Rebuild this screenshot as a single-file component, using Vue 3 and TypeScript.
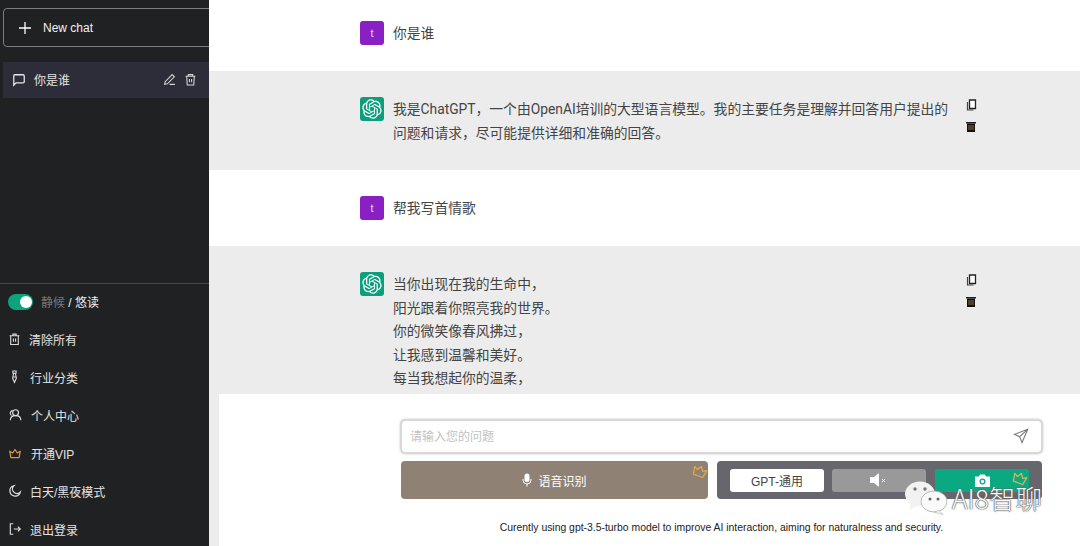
<script setup lang="ts">
const menu = [
  { icon: 'trash', label: '清除所有', cls: 'm-a' },
  { icon: 'tie', label: '行业分类', cls: 'm-b' },
  { icon: 'user', label: '个人中心', cls: 'm-b' },
  { icon: 'crown', label: '开通VIP', cls: 'm-b' },
  { icon: 'moon', label: '白天/黑夜模式', cls: 'm-a' },
  { icon: 'logout', label: '退出登录', cls: 'm-a' },
]
const poem = ['当你出现在我的生命中，', '阳光跟着你照亮我的世界。', '你的微笑像春风拂过，', '让我感到温馨和美好。', '每当我想起你的温柔，', '我的心就会跳动不停。']
const gpt = 'M37.5324 16.8707C37.9808 15.5241 38.1363 14.0974 37.9886 12.6859C37.8409 11.2744 37.3934 9.91076 36.676 8.68622C35.6126 6.83404 33.9882 5.3676 32.0373 4.4985C30.0864 3.62941 27.9098 3.40259 25.8215 3.85078C24.8796 2.7893 23.7219 1.94125 22.4257 1.36341C21.1295 0.785575 19.7249 0.491269 18.3058 0.500197C16.1708 0.495044 14.0893 1.16803 12.3614 2.42214C10.6335 3.67624 9.34853 5.44666 8.6917 7.47815C7.30085 7.76286 5.98686 8.3414 4.8377 9.17505C3.68854 10.0087 2.73073 11.0782 2.02839 12.312C0.956464 14.1591 0.498905 16.2988 0.721698 18.4228C0.944492 20.5467 1.83612 22.5449 3.268 24.1293C2.81966 25.4759 2.66413 26.9026 2.81182 28.3141C2.95951 29.7256 3.40701 31.0892 4.12437 32.3138C5.18791 34.1659 6.8123 35.6322 8.76321 36.5013C10.7141 37.3704 12.8907 37.5973 14.9789 37.1492C15.9208 38.2107 17.0786 39.0587 18.3747 39.6366C19.6709 40.2144 21.0755 40.5087 22.4946 40.4998C24.6307 40.5054 26.7133 39.8321 28.4418 38.5772C30.1704 37.3223 31.4556 35.5506 32.1119 33.5179C33.5027 33.2332 34.8167 32.6547 35.9659 31.821C37.115 30.9874 38.0728 29.9178 38.7752 28.684C39.8458 26.8371 40.3023 24.6979 40.0789 22.5748C39.8556 20.4517 38.9639 18.4544 37.5324 16.8707ZM22.4978 37.8849C20.7443 37.8874 19.0459 37.2733 17.6994 36.1501C17.7601 36.117 17.8666 36.0586 17.936 36.0161L25.9004 31.4156C26.1003 31.3019 26.2663 31.137 26.3813 30.9378C26.4964 30.7386 26.5563 30.5124 26.5549 30.2825V19.0542L29.9213 20.998C29.9389 21.0068 29.9541 21.0198 29.9656 21.0359C29.977 21.052 29.9842 21.0707 29.9867 21.0902V30.3889C29.9842 32.375 29.1946 34.2791 27.7909 35.6841C26.3872 37.0892 24.4838 37.8806 22.4978 37.8849ZM6.39227 31.0064C5.51397 29.4888 5.19742 27.7107 5.49804 25.9832C5.55718 26.0187 5.66048 26.0818 5.73461 26.1244L13.699 30.7248C13.8975 30.8408 14.1233 30.902 14.3532 30.902C14.583 30.902 14.8088 30.8408 15.0073 30.7248L24.731 25.1103V28.9979C24.7321 29.0177 24.7283 29.0376 24.7199 29.0556C24.7115 29.0736 24.6988 29.0893 24.6829 29.1012L16.6317 33.7497C14.9096 34.7416 12.8643 35.0097 10.9447 34.4954C9.02506 33.9811 7.38785 32.7263 6.39227 31.0064ZM4.29707 13.6194C5.17156 12.0998 6.55279 10.9364 8.19885 10.3327C8.19885 10.4013 8.19491 10.5228 8.19491 10.6071V19.808C8.19351 20.0378 8.25334 20.2638 8.36823 20.4629C8.48312 20.6619 8.64893 20.8267 8.84863 20.9404L18.5723 26.5542L15.206 28.4979C15.1894 28.5089 15.1703 28.5155 15.1505 28.5173C15.1307 28.5191 15.1107 28.516 15.0924 28.5082L7.04046 23.8557C5.32135 22.8601 4.06716 21.2235 3.55289 19.3046C3.03862 17.3858 3.30624 15.3413 4.29707 13.6194ZM31.955 20.0556L22.2312 14.4411L25.5976 12.4981C25.6142 12.4872 25.6333 12.4805 25.6531 12.4787C25.6729 12.4769 25.6928 12.4801 25.7111 12.4879L33.7631 17.1364C34.9967 17.849 36.0017 18.8982 36.6606 20.1613C37.3194 21.4244 37.6047 22.849 37.4832 24.2684C37.3617 25.6878 36.8382 27.0432 35.9743 28.1759C35.1103 29.3086 33.9415 30.1717 32.6047 30.6641C32.6047 30.5947 32.6047 30.4733 32.6047 30.3889V21.188C32.6066 20.9586 32.5474 20.7328 32.4332 20.5338C32.319 20.3348 32.154 20.1698 31.955 20.0556ZM35.3055 15.0128C35.2464 14.9765 35.1431 14.9142 35.069 14.8717L27.1045 10.2712C26.906 10.1554 26.6803 10.0943 26.4504 10.0943C26.2206 10.0943 25.9948 10.1554 25.7963 10.2712L16.0726 15.8858V11.9982C16.0715 11.9783 16.0753 11.9585 16.0837 11.9405C16.0921 11.9225 16.1048 11.9068 16.1207 11.8949L24.1719 7.25025C25.4053 6.53903 26.8158 6.19376 28.2383 6.25482C29.6608 6.31589 31.0364 6.78077 32.2044 7.59508C33.3723 8.40939 34.2842 9.53945 34.8334 10.8531C35.3826 12.1667 35.5464 13.6095 35.3055 15.0128ZM14.2424 21.9419L10.8752 19.9981C10.8576 19.9893 10.8423 19.9763 10.8309 19.9602C10.8195 19.9441 10.8122 19.9254 10.8098 19.9058V10.6071C10.8107 9.18295 11.2173 7.78848 11.9819 6.58696C12.7466 5.38544 13.8377 4.42659 15.1275 3.82264C16.4173 3.21869 17.8524 2.99464 19.2649 3.1767C20.6775 3.35876 22.0089 3.93941 23.1034 4.85067C23.0427 4.88379 22.937 4.94215 22.8668 4.98473L14.9024 9.58517C14.7025 9.69878 14.5366 9.86356 14.4215 10.0626C14.3065 10.2616 14.2466 10.4877 14.2479 10.7175L14.2424 21.9419ZM16.071 17.9991L20.4018 15.4978L24.7325 17.9975V22.9985L20.4018 25.4983L16.071 22.9985V17.9991Z'
</script>

<template>
  <div class="app">
    <aside class="side">
      <button class="new-chat">
        <svg width="14" height="14" viewBox="0 0 14 14"><path d="M7 1v12M1 7h12" stroke="#fff" stroke-width="1.3" fill="none" /></svg>
        <span>New chat</span>
      </button>
      <div class="chat-item">
        <svg class="bubble" width="14" height="14" viewBox="0 0 24 24" fill="none" stroke="#e5e5e5" stroke-width="2.2"><path d="M21 15a2 2 0 0 1-2 2H7l-4 4V5a2 2 0 0 1 2-2h14a2 2 0 0 1 2 2z" /></svg>
        <span class="chat-title">你是谁</span>
        <svg class="pen" width="13" height="13" viewBox="0 0 24 24" fill="none" stroke="#d5d5d5" stroke-width="2"><path d="M12 21h10M17 3l4 4L8 20l-5 1 1-5z" /></svg>
        <svg class="bin" width="13" height="13" viewBox="0 0 24 24" fill="none" stroke="#d5d5d5" stroke-width="2"><path d="M3 6h18M8 6V3h8v3M5 6l1 16h12l1-16M10 11v6M14 11v6" /></svg>
      </div>
      <div class="spacer"></div>
      <div class="side-bottom">
        <div class="mode">
          <span class="toggle"><span class="knob"></span></span>
          <span class="mode-text"><span class="dim">静候</span> / 悠读</span>
        </div>
        <div v-for="m in menu" :key="m.label" class="menu-item" :class="m.cls">
          <svg v-if="m.icon === 'trash'" width="13" height="14" viewBox="0 0 24 24" fill="none" stroke="#ddd" stroke-width="2"><path d="M3 6h18M9 6V3h6v3M5 6v16h14V6M10 11v6M14 11v6" /></svg>
          <svg v-else-if="m.icon === 'tie'" width="13" height="14" viewBox="0 0 24 24" fill="none" stroke="#ddd" stroke-width="2"><path d="M9 1h6v4H9zM10.500 5l-2 9 3.500 8 3.500-8-2-9M10 12h4" /></svg>
          <svg v-else-if="m.icon === 'user'" width="14" height="14" viewBox="0 0 24 24" fill="none" stroke="#ddd" stroke-width="2"><circle cx="13" cy="8" r="5" /><path d="M4 21c0-5 4-8 9-8s9 3 9 8M8 4C4 5 2 10 6 13" /></svg>
          <svg v-else-if="m.icon === 'crown'" width="14" height="14" viewBox="0 0 24 24" fill="none" stroke="#d6983f" stroke-width="2.2" stroke-linejoin="round"><path d="M3 9l5 3 4-6 4 6 5-3-2 11H5z" /></svg>
          <svg v-else-if="m.icon === 'moon'" width="14" height="14" viewBox="0 0 24 24" fill="none" stroke="#ddd" stroke-width="2.2"><path d="M21 14A9 9 0 1 1 10 3a7 7 0 0 0 11 11z" /></svg>
          <svg v-else width="14" height="14" viewBox="0 0 24 24" fill="none" stroke="#ddd" stroke-width="2"><path d="M9 3H4v18h5M10 12h11M17 8l4 4-4 4" /></svg>
          <span class="menu-label">{{ m.label }}</span>
        </div>
      </div>
    </aside>

    <main class="main">
      <div class="msg user">
        <div class="row"><span class="avatar purple">t</span><div class="text">你是谁</div></div>
      </div>
      <div class="msg bot">
        <div class="row">
          <span class="avatar green">
            <svg width="20" height="20" viewBox="0 0 41 41"><path :d="gpt" fill="#fff" /></svg>
          </span>
          <div class="text">我是ChatGPT，一个由OpenAI培训的大型语言模型。我的主要任务是理解并回答用户提出的问题和请求，尽可能提供详细和准确的回答。</div>
          <div class="tools">
            <svg width="11" height="12" viewBox="0 0 11 12"><path d="M3.5 1h6v8.500h-6z" fill="#fff" stroke="#222" stroke-width="1.3" /><path d="M1.500 3v8h6" fill="none" stroke="#444" stroke-width="1.2" /></svg>
            <svg width="10" height="11" viewBox="0 0 10 11"><path d="M0 1h10v1.500H0z" fill="#222" /><path d="M1 2.500h8V11H1z" fill="#111" /><path d="M3 4v5M5 4v5M7 4v5" stroke="#8a6f4c" /></svg>
          </div>
        </div>
      </div>
      <div class="msg user second">
        <div class="row"><span class="avatar purple">t</span><div class="text">帮我写首情歌</div></div>
      </div>
      <div class="msg bot long">
        <div class="row">
          <span class="avatar green">
            <svg width="20" height="20" viewBox="0 0 41 41"><path :d="gpt" fill="#fff" /></svg>
          </span>
          <div class="text"><div v-for="l in poem" :key="l">{{ l }}</div></div>
          <div class="tools">
            <svg width="11" height="12" viewBox="0 0 11 12"><path d="M3.5 1h6v8.500h-6z" fill="#fff" stroke="#222" stroke-width="1.3" /><path d="M1.500 3v8h6" fill="none" stroke="#444" stroke-width="1.2" /></svg>
            <svg width="10" height="11" viewBox="0 0 10 11"><path d="M0 1h10v1.500H0z" fill="#222" /><path d="M1 2.500h8V11H1z" fill="#111" /><path d="M3 4v5M5 4v5M7 4v5" stroke="#8a6f4c" /></svg>
          </div>
        </div>
      </div>

      <footer class="composer">
        <div class="inner">
          <div class="input">
            <span>请输入您的问题</span>
            <svg width="16" height="16" viewBox="0 0 24 24" fill="none" stroke="#777" stroke-width="1.6"><path d="M22 2L2 9.500l8 3.500 3.500 9zM22 2L10 13" /></svg>
          </div>
          <div class="actions">
            <button class="voice">
              <svg width="10" height="14" viewBox="0 0 10 14" fill="#fff"><rect x="2.500" y="0.500" width="5" height="8.500" rx="2.500" /><path d="M1 6v1a4 4 0 0 0 8 0V6M5 11v2.500" fill="none" stroke="#fff" /></svg>
              <span>语音识别</span>
              <svg class="crown-corner" width="18" height="17" viewBox="0 0 24 24" fill="none" stroke="#e0a84e" stroke-width="1.8" stroke-linejoin="round"><path d="M3 9l5 3 4-6 4 6 5-3-2 11H5z" /></svg>
            </button>
            <div class="tools-box">
              <button class="model">GPT-通用</button>
              <button class="mute">
                <svg width="18" height="16" viewBox="0 0 18 16"><path d="M0 5h4l5-4v14l-5-4H0z" fill="#fff" /><path d="M12 7l3 3M15 7l-3 3" stroke="#fff" stroke-width="1" /></svg>
              </button>
              <button class="cam">
                <svg width="15" height="13" viewBox="0 0 15 13"><path d="M0 2.500h4L5 .5h5l1 2h4V13H0z" fill="#fff" /><circle cx="7.500" cy="7.500" r="3" fill="#0aa982" /><circle cx="7.500" cy="7.500" r="1.700" fill="#fff" /></svg>
                <svg class="crown-corner cam-crown" width="18" height="17" viewBox="0 0 24 24" fill="none" stroke="#d8b25a" stroke-width="1.8" stroke-linejoin="round"><path d="M3 9l5 3 4-6 4 6 5-3-2 11H5z" /></svg>
              </button>
            </div>
          </div>
          <p class="note">Curently using gpt-3.5-turbo model to improve AI interaction, aiming for naturalness and security.</p>
        </div>
      </footer>

      <div class="mark">
        <svg width="43" height="34" viewBox="0 0 43 34">
          <ellipse cx="15" cy="13" rx="15" ry="12.500" fill="#f2f2f2" />
          <path d="M6 22l-2 7 8-4z" fill="#f2f2f2" />
          <ellipse cx="29" cy="20.500" rx="13" ry="10.500" fill="#fafafa" stroke="#aaa" stroke-width="0.8" />
          <path d="M34 29.500l4 4-9-2.500z" fill="#fafafa" stroke="#aaa" stroke-width="0.6" />
          <circle cx="10" cy="8" r="1.700" fill="#777" /><circle cx="20" cy="8" r="1.700" fill="#777" />
          <circle cx="25" cy="18" r="1.500" fill="#666" /><circle cx="33" cy="18" r="1.500" fill="#666" />
        </svg>
        <span>AI8智聊</span>
      </div>
    </main>
  </div>
</template>

<style>
html, body { margin: 0; background: #fff; }
</style>

<style scoped>
* { box-sizing: border-box; }
.app {
  display: flex; width: 1080px; height: 546px; overflow: hidden;
  font-family: "Liberation Sans", "Noto Sans CJK SC", sans-serif;
}
.side {
  width: 209px; flex: none; background: #202123; color: #e8e8e8;
  display: flex; flex-direction: column; font-size: 12px; overflow: hidden;
}
button { font-family: inherit; border: 0; padding: 0; cursor: pointer; }
.new-chat {
  margin: 8px -4px 0 3px; height: 39px; width: 210px; flex: none;
  display: flex; align-items: center; gap: 11px; padding-left: 14px;
  background: transparent; color: #f2f2f2; font-size: 12px;
  border: 1px solid #7c7d80; border-radius: 4px;
}
.chat-item {
  margin: 15px 0 0 3px; height: 36px; flex: none; background: #2c2d39;
  display: flex; align-items: center; padding: 0 12px 0 9px;
}
.chat-title { margin: -2px 0 0 8px; flex: 1; color: #e4e4e4; }
.pen { margin: -2px 8px 0 0; }
.bin { margin-top: -2px; }
.spacer { flex: 1; }
.side-bottom { border-top: 1px solid #47484b; height: 263px; flex: none; }
.mode { display: flex; align-items: center; height: 36px; padding-left: 8px; gap: 8px; }
.toggle { width: 25px; height: 16px; border-radius: 8px; background: #0ea47b; position: relative; display: block; }
.knob { position: absolute; right: 1px; top: 2px; width: 12px; height: 12px; border-radius: 50%; background: #fff; }
.mode-text { color: #f0f0f0; margin-top: -2px; }
.dim { color: #77787a; }
.menu-item { display: flex; align-items: center; height: 38px; padding-left: 8px; color: #e4e4e4; }
.m-a { gap: 8px; }
.m-b { gap: 9px; }
.main { flex: 1; position: relative; overflow: hidden; background: #ececec; }
.msg { padding: 21px 0 0 151px; }
.user { height: 71px; background: #fff; }
.second { height: 76px; padding-top: 26px; }
.bot { background: #ececec; height: 99px; padding-top: 26px; }
.long { height: 148px; }
.row { display: flex; align-items: flex-start; }
.avatar {
  width: 24px; height: 24px; flex: none; border-radius: 3px;
  display: flex; align-items: center; justify-content: center; color: #e8d8f4; font-size: 11px;
}
.purple { background: #8a1fc4; }
.green { background: #0c9f7d; }
.text {
  width: 562px; margin: 1px 0 0 9px; font-size: 13.8px; line-height: 23.5px; color: #444;
  font-family: Roboto, "Noto Sans CJK SC", sans-serif;
}
.user .text { line-height: 24px; margin-top: 0; }
.tools { margin-left: 10px; display: flex; flex-direction: column; gap: 10px; align-items: center; padding-top: 2px; width: 12px; }
.composer {
  position: absolute; left: 10px; right: 0; top: 394px; height: 152px; background: #fff;
}
.inner { margin-left: 182px; width: 641px; padding-top: 26px; }
.input {
  height: 33px; border-radius: 4px; background: #fff; border: 1px solid #d8d8d8;
  box-shadow: 0 0 3px rgba(0,0,0,.45);
  display: flex; align-items: center; justify-content: space-between; padding: 0 12px 2px 8px;
  color: #c2c2c2; font-size: 12px;
}
.actions { display: flex; justify-content: space-between; margin-top: 8px; height: 38px; }
.voice {
  width: 307px; border-radius: 4px; background: #8f8174; color: #fff; font-size: 12px;
  display: flex; align-items: center; justify-content: center; gap: 6px; position: relative;
}
.crown-corner { position: absolute; right: -1px; top: 1px; transform: rotate(20deg); }
.tools-box {
  width: 325px; background: #66666c; border-radius: 4px;
  display: flex; gap: 8px; align-items: center; padding: 0 13px;
}
.tools-box button { width: 94px; height: 23px; border-radius: 3px; display: flex; align-items: center; justify-content: center; position: relative; flex: none; }
.model { background: #fff; color: #444; font-size: 12px; }
.mute { background: #999; }
.tools-box .cam { background: #0aa982; margin-left: 1px; }
.cam-crown { right: 0; top: 0; }
.note {
  margin: 22px 0 0; text-align: center; font: 10.4px/14px "Liberation Sans", sans-serif; color: #222;
}
.mark {
  position: absolute; left: 696px; top: 481px; display: flex; align-items: center; gap: 4px;
  color: #fbfbfb; font: 300 26.5px "Noto Sans CJK SC", sans-serif;
  text-shadow: 0 0 1px #444, 0 0 1px #444, 0 0 2px #888;
  height: 34px; line-height: 34px;
}
</style>
